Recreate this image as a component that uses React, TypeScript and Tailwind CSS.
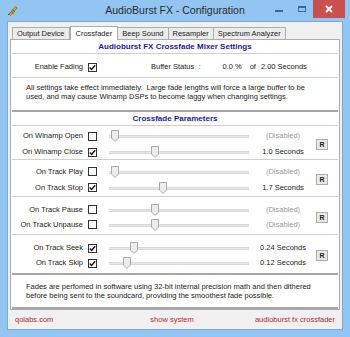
import React from "react";

// --- Small pieces ---

function Check({ on }: { on: boolean }) {
  return (
    <div className="w-[9px] h-[9px] border border-[#333] bg-white flex items-center justify-center shrink-0">
      {on && (
        <svg width="7" height="7" viewBox="0 0 7 7">
          <path d="M0.8 3.6 L2.6 5.4 L6.2 1.2" fill="none" stroke="#111" strokeWidth="1.4" />
        </svg>
      )}
    </div>
  );
}

function Slider({ pos }: { pos: number }) {
  // pos = thumb left offset in px from track start
  return (
    <div className="relative w-[140px] h-[12px] shrink-0">
      <div className="absolute left-0 right-0 top-[5px] h-[3px] bg-[#e6e6e6] border-y border-[#d9d9d9]" />
      <svg className="absolute top-0" style={{ left: pos }} width="8" height="12" viewBox="0 0 8 12">
        <path d="M0.5 0.5 H7.5 V8 L4 11.5 L0.5 8 Z" fill="#ececec" stroke="#a9a9a9" />
      </svg>
    </div>
  );
}

type Row = { label: string; on: boolean; pos: number; value: string };

function Group({ rows, h, gap }: { rows: Row[]; h: string; gap: string }) {
  return (
    <div className={`flex items-center pt-[3px] border-b border-[#cfcfcf] ${h}`}>
      <div className={`flex flex-col ${gap}`}>
        {rows.map((r) => (
          <div key={r.label} className="flex items-center h-[10px]">
            <div className="w-[71px] text-right leading-none">{r.label}</div>
            <div className="ml-[5px]"><Check on={r.on} /></div>
            <div className="ml-[12px]"><Slider pos={r.pos} /></div>
            <div className={`w-[48px] ml-[10px] text-center leading-none ${r.value === "(Disabled)" ? "text-[#9a9a9a]" : "text-[#222]"}`}>
              {r.value}
            </div>
          </div>
        ))}
      </div>
      <div className="ml-[9px] w-[12px] h-[11px] border border-[#acacac] bg-[#e9e9e9] flex items-center justify-center text-[7px] leading-none font-bold text-[#222]">
        R
      </div>
    </div>
  );
}

export default function App() {
  return (
    <div className="w-[350px] h-[337px] bg-[#93c5f2] flex flex-col font-['Liberation_Sans',Arial,sans-serif] text-[7.5px] text-[#1a1a1a] overflow-hidden">
      {/* Title bar */}
      <div className="relative h-[21px] shrink-0 flex items-center">
        <svg className="ml-[7px]" width="11" height="11" viewBox="0 0 11 11">
          <path d="M2 9 L8.5 1.5 L10 3 L3.5 10.5 Z" fill="#eba51e" stroke="#8a5a10" strokeWidth="0.7" />
          <path d="M4 6.5 L6.5 8.5 M5.5 4.8 L8 6.8" stroke="#7a4c0c" strokeWidth="0.8" />
          <path d="M1 10 L2.5 8.5" stroke="#555" strokeWidth="1" />
        </svg>
        <div className="absolute left-0 right-0 top-[3px] text-center text-[10.5px] text-[#2a2a2a]">AudioBurst FX - Configuration</div>
        <div className="absolute right-[5px] top-0 flex items-start">
          <div className="w-[24px] h-[17px] flex items-center justify-center">
            <div className="w-[8px] h-[2px] bg-[#3b6a96] mt-[4px]" />
          </div>
          <div className="w-[22px] h-[17px] flex items-center justify-center">
            <div className="w-[8px] h-[6px] border border-[#3b6a96] border-t-2" />
          </div>
          <div className="w-[32px] h-[18px] bg-[#c9504c] flex items-center justify-center">
            <svg width="8" height="8" viewBox="0 0 8 8">
              <path d="M1 1 L7 7 M7 1 L1 7" stroke="#fff" strokeWidth="1.8" />
            </svg>
          </div>
        </div>
      </div>

      {/* Client area */}
      <div className="mx-[7px] mb-[7px] flex-1 bg-[#f0f0f0] border border-[#7ea9d4] flex flex-col">
        {/* Tabs */}
        <div className="flex items-end h-[17px] pl-[4px]">
          <div className="h-[12px] px-[4px] border border-b-0 border-[#acacac] bg-[#ececec] flex items-center">Output Device</div>
          <div className="h-[14px] px-[5px] border border-b-0 border-[#acacac] bg-white flex items-center -mb-[1px] relative z-10">Crossfader</div>
          <div className="h-[12px] px-[4px] border border-b-0 border-l-0 border-[#acacac] bg-[#ececec] flex items-center">Beep Sound</div>
          <div className="h-[12px] px-[4px] border border-b-0 border-l-0 border-[#acacac] bg-[#ececec] flex items-center">Resampler</div>
          <div className="h-[12px] px-[4px] border border-b-0 border-l-0 border-[#acacac] bg-[#ececec] flex items-center">Spectrum Analyzer</div>
        </div>

        {/* Panel */}
        <div className="mx-[2px] bg-white border border-[#acacac] flex flex-col px-[1px]">
          <div className="h-[14px] border-b border-[#cfcfcf] flex items-center justify-center font-bold text-[#1a1a9c] text-[8px]">
            Audioburst FX Crossfade Mixer Settings
          </div>
          <div className="h-[24px] pt-[3px] border-b border-[#cfcfcf] flex items-center">
            <div className="w-[71px] text-right">Enable Fading</div>
            <div className="ml-[5px]"><Check on={true} /></div>
            <div className="ml-[54px]">Buffer Status&nbsp;&nbsp;:</div>
            <div className="ml-[22px]">0.0 %</div>
            <div className="ml-[8px]">of</div>
            <div className="ml-[5px]">2.00 Seconds</div>
          </div>
          <div className="h-[34px] border-b-2 border-[#a6a6a6] pl-[14px] pt-[6px] leading-[8.5px]">
            <div>All settings take effect immediately.&nbsp; Large fade lengths will force a large buffer to be</div>
            <div>used, and may cause Winamp DSPs to become laggy when changing settings.</div>
          </div>
          <div className="h-[14px] border-b border-[#cfcfcf] flex items-center justify-center font-bold text-[#1a1a9c] text-[8px]">
            Crossfade Parameters
          </div>

          <Group
            h="h-[34px]"
            gap="gap-[6px]"
            rows={[
              { label: "On Winamp Open", on: false, pos: 2, value: "(Disabled)" },
              { label: "On Winamp Close", on: true, pos: 42, value: "1.0 Seconds" },
            ]}
          />
          <Group
            h="h-[37px]"
            gap="gap-[6px]"
            rows={[
              { label: "On Track Play", on: false, pos: 2, value: "(Disabled)" },
              { label: "On Track Stop", on: true, pos: 50, value: "1.7 Seconds" },
            ]}
          />
          <Group
            h="h-[38px]"
            gap="gap-[5px]"
            rows={[
              { label: "On Track Pause", on: false, pos: 42, value: "(Disabled)" },
              { label: "On Track Unpause", on: false, pos: 42, value: "(Disabled)" },
            ]}
          />
          <Group
            h="h-[39px]"
            gap="gap-[5px]"
            rows={[
              { label: "On Track Seek", on: true, pos: 21, value: "0.24 Seconds" },
              { label: "On Track Skip", on: true, pos: 14, value: "0.12 Seconds" },
            ]}
          />
          <div className="h-[2px] bg-[#a6a6a6] -mt-[1px]" />
          <div className="h-[34px] border-b-2 border-[#a6a6a6] pl-[14px] pt-[8px] leading-[8.5px]">
            <div>Fades are perfomed in software using 32-bit internal precision math and then dithered</div>
            <div>before being sent to the soundcard, providing the smoothest fade possible.</div>
          </div>
        </div>

        {/* Links */}
        <div className="flex-1 flex items-center px-[7px] text-[#b02a2a]">
          <div>qolabs.com</div>
          <div className="ml-[97px]">show system</div>
          <div className="ml-auto">audioburst fx crossfader</div>
        </div>
      </div>
    </div>
  );
}
